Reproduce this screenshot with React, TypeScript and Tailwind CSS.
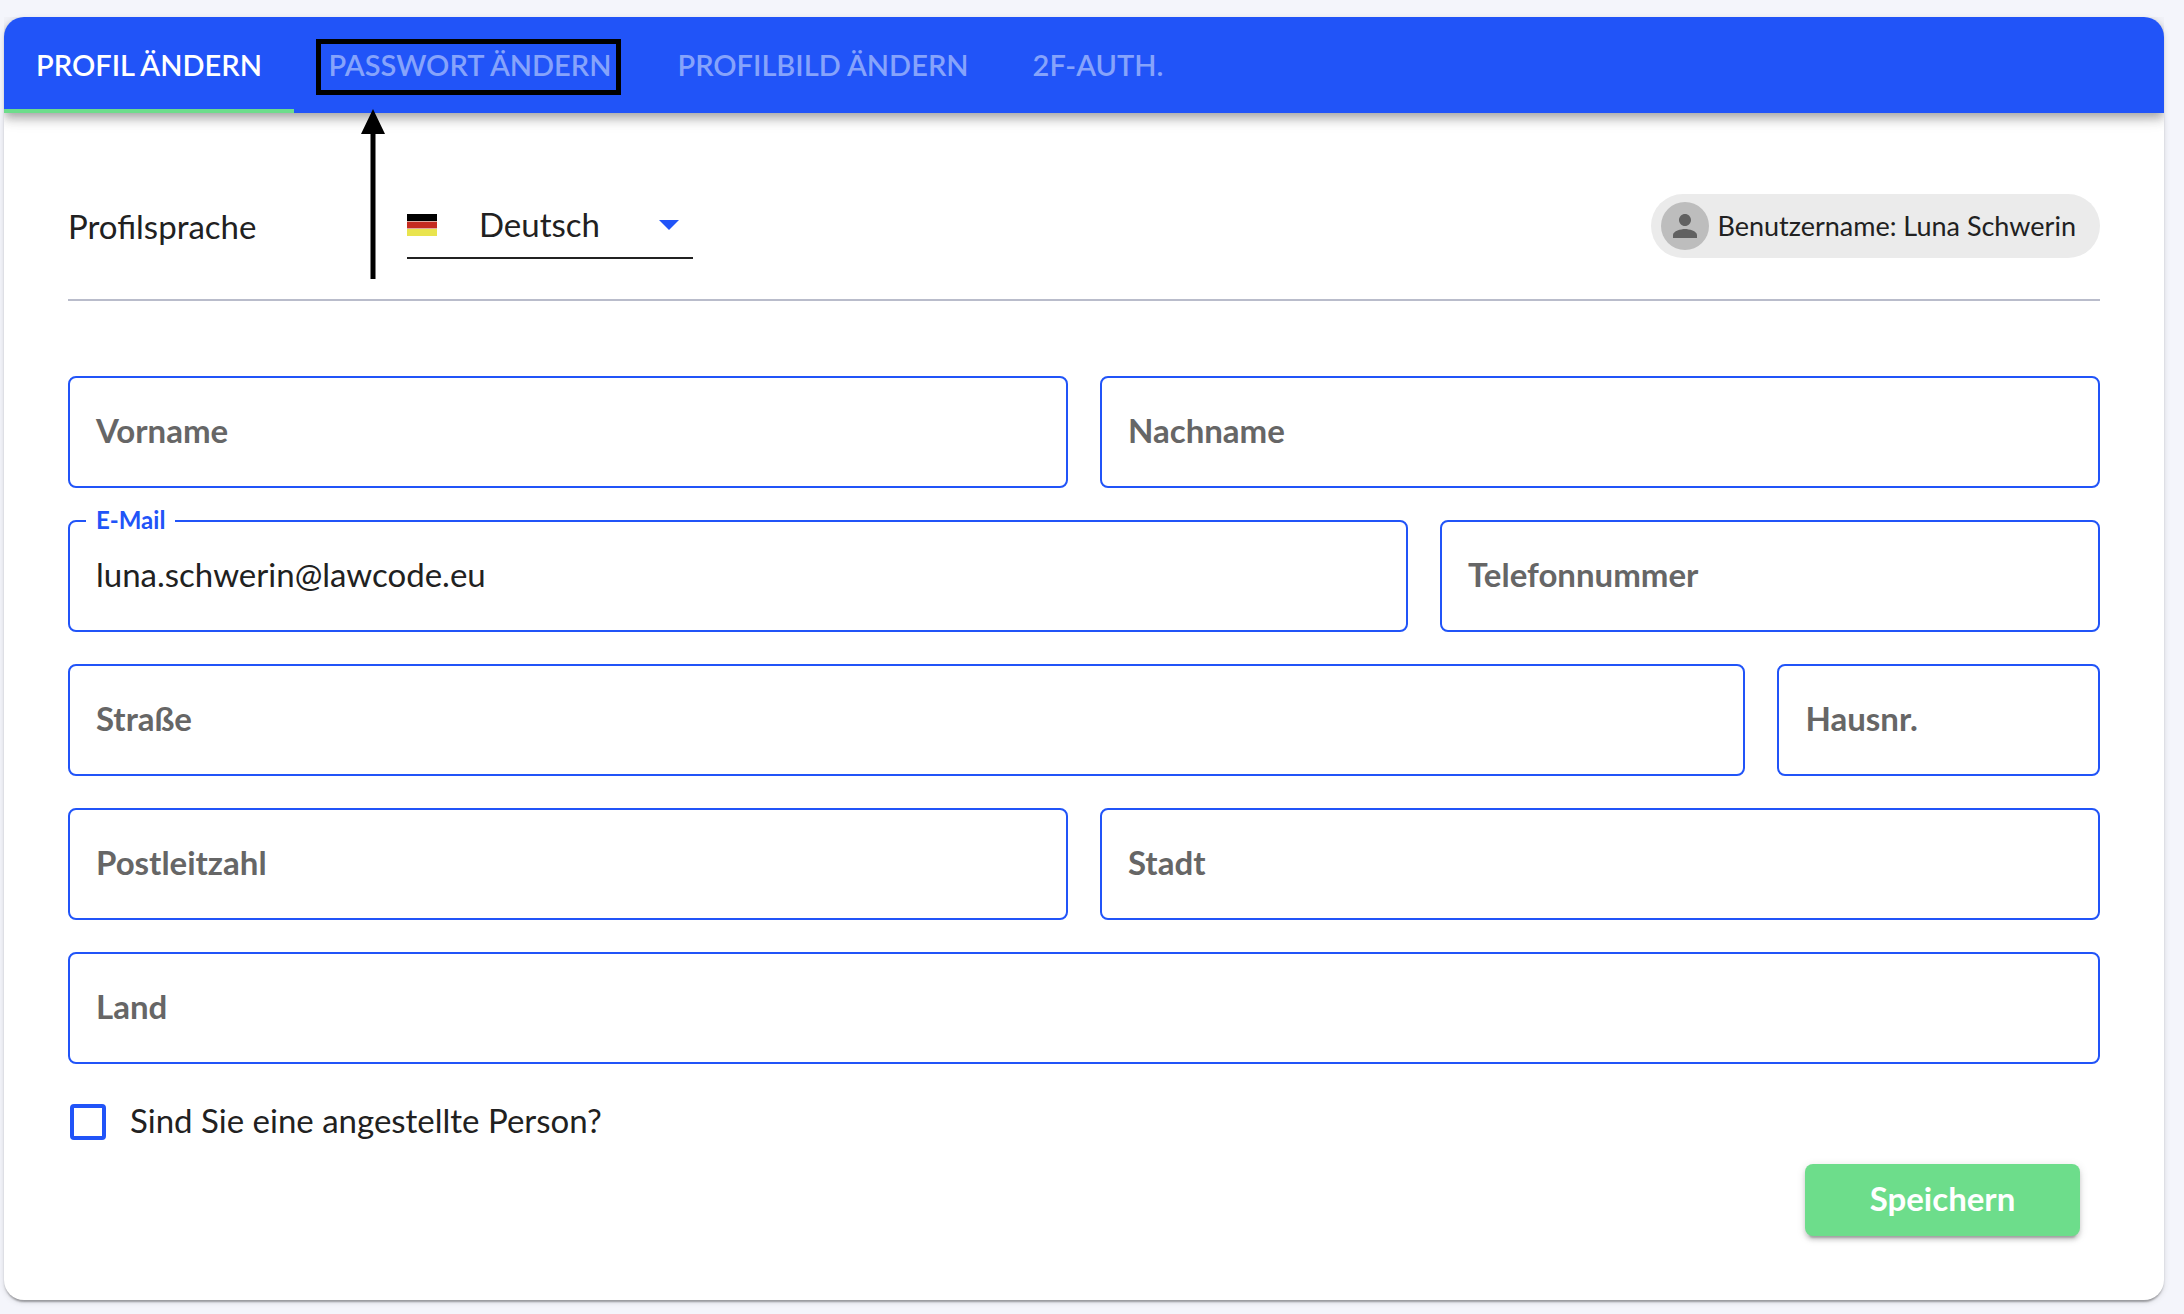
import { useState } from "react";

const tabs = [
  { label: "PROFIL ÄNDERN", width: "min-w-[290px]" },
  { label: "PASSWORT ÄNDERN", width: "min-w-[352px]" },
  { label: "PROFILBILD ÄNDERN", width: "min-w-[354px]" },
  { label: "2F-AUTH.", width: "min-w-[196px]" },
];

type FieldProps = {
  id: string;
  label: string;
  type?: string;
  defaultValue?: string;
};

function Field({ id, label, type = "text", defaultValue = "" }: FieldProps) {
  const [value, setValue] = useState(defaultValue);

  return (
    <div className="relative grid items-center">
      <input
        id={id}
        type={type}
        value={value}
        onChange={(e) => setValue(e.target.value)}
        className="[grid-area:1/1] w-full min-w-0 h-28 px-[26px] pb-1 rounded-lg border-2 border-[#2154f8] bg-white text-[33px] text-[#212121] outline-none"
      />
      {value ? (
        <label
          htmlFor={id}
          className="absolute -top-4 left-[18px] px-[10px] bg-white text-2xl leading-8 font-bold text-[#2154f8]"
        >
          {label}
        </label>
      ) : (
        <label
          htmlFor={id}
          className="[grid-area:1/1] justify-self-start ml-7 pb-1 text-[33px] leading-10 font-bold text-[#666666] pointer-events-none"
        >
          {label}
        </label>
      )}
    </div>
  );
}

function GermanFlag() {
  return (
    <svg viewBox="0 0 30 22" className="w-[30px] h-[22px] shrink-0" aria-hidden="true">
      <rect width="30" height="22" fill="#e0a9a0" />
      <rect width="30" height="7" fill="#000" />
      <rect y="8" width="30" height="6" fill="#c52b20" />
      <rect y="15" width="30" height="7" fill="#e9e44e" />
    </svg>
  );
}

export default function App() {
  const [active, setActive] = useState(0);

  return (
    <div className="min-h-screen bg-[#f4f5fb] pt-[17px] pb-[14px] pl-1 pr-5 font-['Lato',sans-serif] text-[#212121]">
      <main className="relative rounded-[20px] bg-white shadow-[0_4px_2px_-2px_rgba(0,0,0,0.2),0_2px_2px_0_rgba(0,0,0,0.14),0_2px_6px_0_rgba(0,0,0,0.12)]">
        <nav
          role="tablist"
          className="flex h-24 rounded-t-[20px] overflow-hidden bg-[#2154f8] shadow-[0_4px_8px_-2px_rgba(0,0,0,0.2),0_8px_10px_0_rgba(0,0,0,0.14),0_2px_20px_0_rgba(0,0,0,0.12)] [clip-path:inset(0_0_-40px_0)]"
        >
          {tabs.map((tab, i) => (
            <button
              key={tab.label}
              type="button"
              role="tab"
              aria-selected={active === i}
              onClick={() => setActive(i)}
              className={`${tab.width} border-y-4 border-t-transparent text-[29px] leading-10 font-semibold ${
                active === i ? "text-white border-b-[#6ddd8b]" : "text-[#86a3fb] border-b-transparent"
              }`}
            >
              {tab.label}
            </button>
          ))}
        </nav>

        {/* Hinweis auf den Tab "Passwort ändern" */}
        <div className="absolute top-[22px] left-[312px] w-[305px] h-14 border-[5px] border-black pointer-events-none" />
        <svg
          viewBox="0 0 24 170"
          className="absolute top-[92px] left-[357px] w-6 h-[170px] pointer-events-none"
          aria-hidden="true"
        >
          <path d="M12 0 24 25H14.5V170H9.5V25H0Z" fill="#000" />
        </svg>

        <form className="px-16 pt-20 pb-16" onSubmit={(e) => e.preventDefault()}>
          <div className="flex items-center justify-between pb-10 border-b-2 border-[#b9bccb]">
            <div className="flex items-center">
              <label htmlFor="language" className="w-[339px] text-[33px] leading-10">
                Profilsprache
              </label>
              <div className="relative flex items-center w-[286px] h-[66px] border-b-2 border-[#212121]">
                <GermanFlag />
                <select
                  id="language"
                  defaultValue="de"
                  className="grow h-full pl-[42px] appearance-none bg-transparent text-[33px] outline-none"
                >
                  <option value="de">Deutsch</option>
                </select>
                <svg viewBox="0 0 20 10" className="absolute right-[14px] w-5 h-[10px] pointer-events-none" aria-hidden="true">
                  <path d="M0 0H20L10 10Z" fill="#2154f8" />
                </svg>
              </div>
            </div>

            <div className="flex items-center gap-2 h-16 pl-[10px] pr-6 rounded-full bg-[#ebebeb]">
              <span className="flex items-center justify-center w-12 h-12 rounded-full bg-[#bdbdbd]">
                <svg viewBox="0 0 24 24" className="w-9 h-9" fill="#616161" aria-hidden="true">
                  <path d="M12 12c2.21 0 4-1.79 4-4s-1.79-4-4-4-4 1.79-4 4 1.79 4 4 4zm0 2c-2.67 0-8 1.34-8 4v2h16v-2c0-2.66-5.33-4-8-4z" />
                </svg>
              </span>
              <span className="text-[27px] leading-8">Benutzername: Luna Schwerin</span>
            </div>
          </div>

          <div className="flex flex-col gap-8 pt-[75px]">
            <div className="grid grid-cols-2 gap-8">
              <Field id="firstname" label="Vorname" />
              <Field id="lastname" label="Nachname" />
            </div>
            <div className="grid grid-cols-[67fr_33fr] gap-8">
              <Field id="email" label="E-Mail" type="email" defaultValue="luna.schwerin@lawcode.eu" />
              <Field id="phone" label="Telefonnummer" type="tel" />
            </div>
            <div className="grid grid-cols-[26fr_5fr] gap-8">
              <Field id="street" label="Straße" />
              <Field id="housenumber" label="Hausnr." />
            </div>
            <div className="grid grid-cols-2 gap-8">
              <Field id="zip" label="Postleitzahl" />
              <Field id="city" label="Stadt" />
            </div>
            <Field id="country" label="Land" />
          </div>

          <div className="flex items-center gap-6 pt-9 pl-[2px]">
            <input
              id="employed"
              type="checkbox"
              className="w-9 h-9 appearance-none rounded border-4 border-[#2154f8] checked:bg-[#2154f8]"
            />
            <label htmlFor="employed" className="pb-1 text-[33px] leading-10">
              Sind Sie eine angestellte Person?
            </label>
          </div>

          <div className="flex justify-end pt-5 pr-5">
            <button
              type="submit"
              className="w-[275px] h-[72px] pb-1 rounded-lg bg-[#6ddd8b] text-[33px] leading-10 font-bold text-white shadow-[0_6px_2px_-4px_rgba(0,0,0,0.2),0_4px_4px_0_rgba(0,0,0,0.14),0_2px_10px_0_rgba(0,0,0,0.12)]"
            >
              Speichern
            </button>
          </div>
        </form>
      </main>
    </div>
  );
}
